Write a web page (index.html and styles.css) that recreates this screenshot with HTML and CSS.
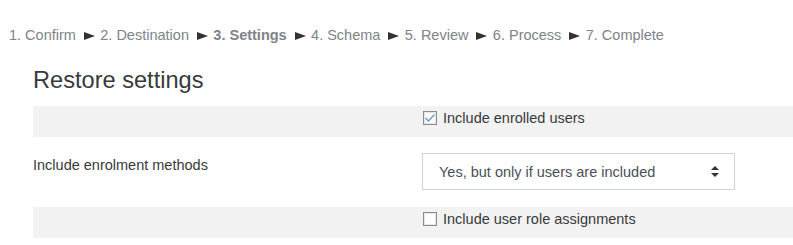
FILE: index.html
```html
<!DOCTYPE html>
<html>
<head>
<meta charset="utf-8">
<link rel="stylesheet" href="styles.css">
</head>
<body>
<nav class="steps">
  <span>1. Confirm</span><span class="sep"></span>
  <span>2. Destination</span><span class="sep"></span>
  <span class="current">3. Settings</span><span class="sep"></span>
  <span>4. Schema</span><span class="sep"></span>
  <span>5. Review</span><span class="sep"></span>
  <span>6. Process</span><span class="sep"></span>
  <span>7. Complete</span>
</nav>
<main class="content">
  <h2 class="title">Restore settings</h2>
  <div class="row shaded">
    <div class="label"></div>
    <label class="check"><span class="box checked"><svg width="12" height="10" viewBox="0 0 12 10"><path d="M1.5 5 L4.5 8 L10.5 1.5" fill="none" stroke="#5b9bd5" stroke-width="1.3"/></svg></span>Include enrolled users</label>
  </div>
  <div class="row plain">
    <div class="label">Include enrolment methods</div>
    <div class="select">Yes, but only if users are included<span class="arrows"><svg width="8" height="11" viewBox="0 0 8 11"><path d="M4 0 L8 4 L0 4 Z M0 7 L8 7 L4 11 Z" fill="#333"/></svg></span></div>
  </div>
  <div class="row shaded">
    <div class="label"></div>
    <label class="check"><span class="box"></span>Include user role assignments</label>
  </div>
</main>
</body>
</html>
```
FILE: styles.css
```css
html, body {
  margin: 0;
  padding: 0;
  background: #fff;
  font-family: "Liberation Sans", Arial, sans-serif;
  font-size: 14.5px;
  color: #373a3c;
}
.steps {
  padding: 24px 0 0 9px;
  height: 22px;
  line-height: 22px;
  color: #7d8389;
  white-space: nowrap;
  display: flex;
  align-items: center;
}
.steps span { white-space: pre; }
.steps .sep {
  width: 0;
  height: 0;
  border-left: 11px solid #333;
  border-top: 4px solid transparent;
  border-bottom: 4px solid transparent;
  margin: 1px 5.4px 0 8px;
}
.steps .current { font-weight: bold; }
.content {
  padding-left: 33px;
}
.title {
  margin: 20px 0 0 0;
  font-weight: normal;
  font-size: 23.6px;
  line-height: 28px;
  height: 27px;
  color: #373a3c;
}
.row {
  display: grid;
  grid-template-columns: 389px 1fr;
  align-items: center;
}
.row.shaded {
  background: #f2f2f2;
  height: 31px;
  margin-top: 13px;
}
.row.plain {
  margin-top: 16px;
  height: 38px;
  align-items: start;
}
.row.plain .label {
  padding-top: 3px;
  line-height: 18px;
}
.check {
  display: flex;
  align-items: center;
  padding-left: 1px;
  margin-top: -8px;
}
.box {
  width: 12px;
  height: 12px;
  border: 1px solid #8c8c8c;
  background: #fff;
  margin-right: 6px;
  display: inline-flex;
  align-items: center;
  justify-content: center;
  box-shadow: inset 0 0 0 1px #e6e6e6;
}
.select {
  width: 280px;
  height: 35px;
  border: 1px solid #ced4da;
  padding: 0 15px 0 16px;
  display: flex;
  align-items: center;
  justify-content: space-between;
  color: #495057;
  background: #fff;
}
.arrows { display: flex; }
.row.plain + .row.shaded { margin-top: 16px; }
```
